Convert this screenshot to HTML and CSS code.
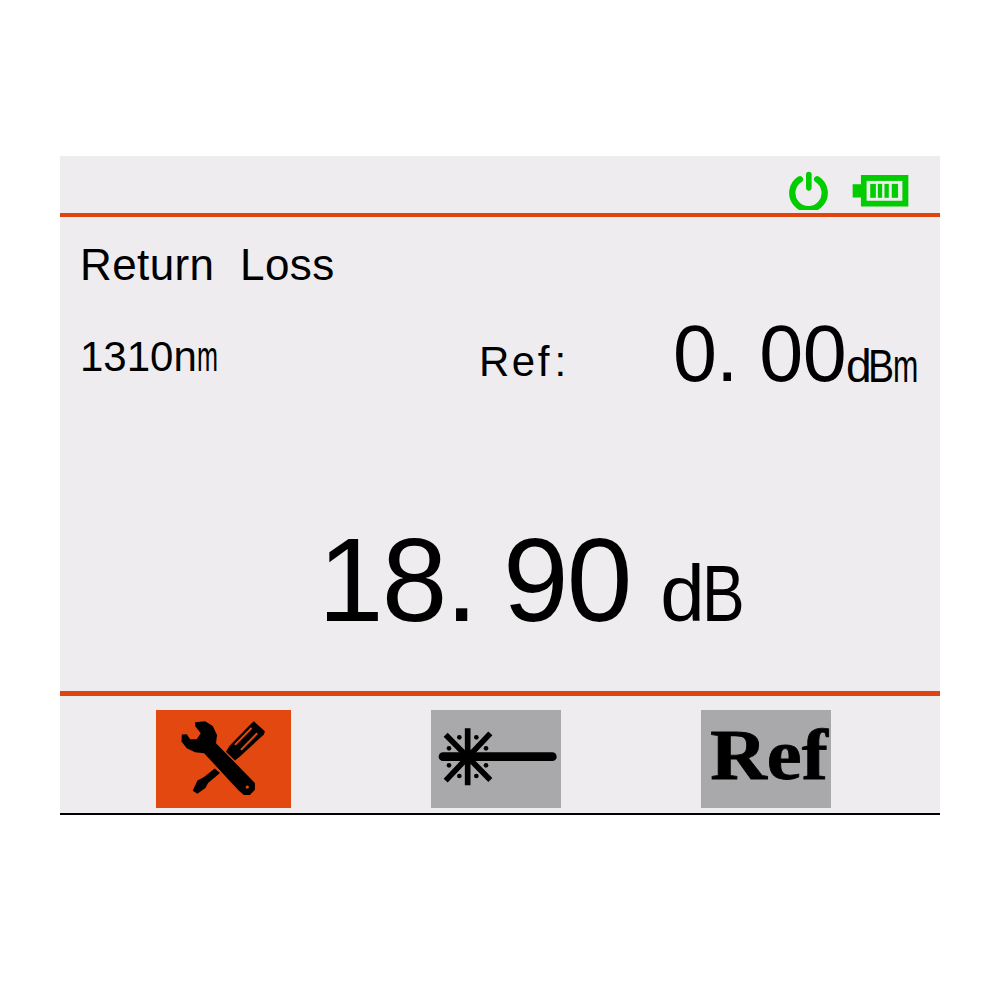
FILE: index.html
```html
<!DOCTYPE html>
<html lang="en">
<head>
    <meta charset="UTF-8">
    <title>Return Loss</title>
    <link rel="stylesheet" href="styles.css">
</head>
<body>
    <div class="screen">
        <div class="status-bar">
            <svg class="power-icon" viewBox="84 62 124 116">
                <path d="M120 86 A49 49 0 1 0 172 86" fill="none" stroke="#00cc00" stroke-width="19" stroke-linecap="round"/>
                <path d="M147 72 V112" fill="none" stroke="#00cc00" stroke-width="17" stroke-linecap="round"/>
            </svg>
            <svg class="battery-icon" viewBox="276 70 172 98">
                <path d="M278 100 H303 V72 H446 V167 H303 V140 H278 Z" fill="#00cc00"/>
                <rect x="320" y="90" width="108" height="60" fill="#eeecee"/>
                <rect x="331" y="99" width="17" height="42" fill="#00cc00"/>
                <rect x="354" y="99" width="13" height="42" fill="#00cc00"/>
                <rect x="374" y="99" width="13" height="42" fill="#00cc00"/>
                <rect x="396" y="99" width="19" height="42" fill="#00cc00"/>
            </svg>
        </div>

        <div class="main">
            <div class="title">Return Loss</div>
            <div class="ref-row">
                <span class="wavelength">1310n<span class="squeeze squeeze-m">m</span></span>
                <span class="ref-label">Re<span class="ref-f">f</span>:</span>
                <span class="ref-value">0<span class="dot">.</span>00</span>
                <span class="ref-unit">d<span class="squeeze squeeze-b">B</span><span class="squeeze squeeze-m2">m</span></span>
            </div>
            <div class="reading">
                <span class="reading-value">18<span class="dot">.</span>90</span>
                <span class="reading-unit">d<span class="squeeze squeeze-db">B</span></span>
            </div>
        </div>

        <div class="toolbar">
            <div class="tool tool-settings">
                <svg viewBox="48 60 405 295">
                    <path d="M165 97 L195 94 L218 108 L231 135 L228 160 L345 280 L345 300 L330 316 L312 316 L296 302 L192 190 L165 187 L140 175 L124 155 L125 134 L140 133 L150 148 L170 148 L182 130 L165 108 Z"/>
                    <path d="M342 94 L375 124 L372 134 L300 200 L285 212 L258 186 L268 168 L335 100 Z"/>
                    <path d="M224 236 L240 250 L204 280 L196 295 L172 312 L158 303 L172 272 L192 262 Z"/>
                    <circle cx="322" cy="292" r="5" fill="#e2480f"/>
                    <path d="M285 165 L335 114 M303 180 L352 130" fill="none" stroke="#e2480f" stroke-width="6"/>
                </svg>
            </div>
            <div class="tool tool-laser">
                <svg viewBox="32 60 390 294">
                    <path d="M68 200 H396" stroke="#000" stroke-width="26" stroke-linecap="round"/>
                    <path d="M142 115 V286 M76 134 L210 270 M210 130 L76 272" stroke="#000" stroke-width="17" fill="none"/>
                    <circle cx="117" cy="142" r="7"/>
                    <circle cx="168" cy="142" r="7"/>
                    <circle cx="86" cy="175" r="7"/>
                    <circle cx="197" cy="175" r="7"/>
                    <circle cx="86" cy="226" r="7"/>
                    <circle cx="197" cy="226" r="7"/>
                    <circle cx="117" cy="258" r="7"/>
                    <circle cx="168" cy="258" r="7"/>
                </svg>
            </div>
            <div class="tool tool-ref"><span class="ref-word">Ref</span></div>
        </div>
    </div>
</body>
</html>
```

FILE: styles.css
```css
body {
    margin: 0;
    background-color: #fff;
    color: #000;
    font-family: 'Liberation Sans', sans-serif;
}

.screen {
    width: 880px;
    margin: 156px 0 0 60px;
    background-color: #eeecee;
    border-bottom: 2px solid #000;
}

.status-bar {
    height: 61px;
    display: flex;
    justify-content: flex-end;
    align-items: center;
    gap: 23px;
    padding-right: 31px;
    padding-top: 11px;
    box-sizing: border-box;
    border-bottom: 4px solid #e0440e;
}

.power-icon {
    width: 41px;
    height: 39px;
}

.battery-icon {
    width: 57px;
    height: 33px;
}

.main {
    height: 474px;
    padding-left: 20px;
    display: flex;
    flex-direction: column;
}

.title {
    font-size: 44px;
    line-height: 52px;
    letter-spacing: 0.4px;
    word-spacing: 13px;
    margin-top: 22px;
}

/* numbers and units sit on different baselines, as on the device */
.ref-row {
    display: flex;
    align-items: flex-end;
    height: 79px;
    margin-top: 30px;
    font-size: 42px;
    line-height: 1;
}

.wavelength {
    width: 399px;
    padding-bottom: 22px;
}

.ref-label {
    width: 194px;
    padding-bottom: 17px;
    letter-spacing: 2.5px;
}

.ref-f {
    letter-spacing: 5px;
}

.ref-value {
    font-size: 79px;
    letter-spacing: -0.6px;
    padding-bottom: 7px;
}

.ref-value .dot {
    letter-spacing: 21px;
}

.ref-unit {
    font-size: 46px;
    letter-spacing: -3.3px;
    padding-bottom: 11px;
}

.reading {
    display: flex;
    align-items: baseline;
    margin-top: 115px;
    padding-left: 238px;
}

.reading-value {
    font-size: 118px;
    line-height: 130px;
    letter-spacing: -2px;
}

.reading-value .dot {
    letter-spacing: 25px;
}

.reading-unit {
    font-size: 80px;
    line-height: 1;
    letter-spacing: -3px;
    margin-left: 30px;
}

.squeeze {
    display: inline-block;
    transform-origin: left;
    letter-spacing: 0;
}

.squeeze-m {
    transform: scaleX(0.6);
}

.squeeze-b {
    width: 25px;
    transform: scaleX(0.85);
}

.squeeze-m2 {
    transform: scaleX(0.66);
}

.squeeze-db {
    transform: scaleX(0.8);
}

.toolbar {
    height: 122px;
    display: flex;
    padding: 14px 0 0 96px;
    box-sizing: border-box;
    border-top: 5px solid #e0440e;
}

.tool {
    height: 98px;
    background-color: #a9a9ab;
}

.tool svg {
    display: block;
    width: 100%;
    height: 100%;
}

.tool-settings {
    width: 135px;
    background-color: #e2480f;
}

.tool-laser {
    width: 130px;
    margin-left: 140px;
}

.tool-ref {
    width: 130px;
    margin-left: 140px;
    padding-left: 6px;
    box-sizing: border-box;
    font-family: 'Liberation Serif', serif;
    font-weight: bold;
    font-size: 72px;
    line-height: 91px;
    text-align: center;
}

.ref-word {
    display: inline-block;
    transform: scaleX(1.09);
    -webkit-text-stroke: 0.8px #000;
}
```
